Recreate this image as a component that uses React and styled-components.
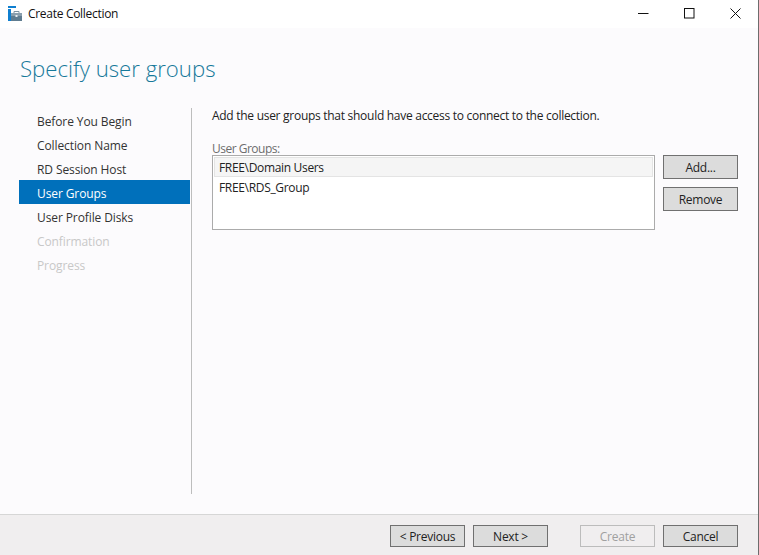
import React from 'react';
import styled, { createGlobalStyle } from 'styled-components';

const Global = createGlobalStyle`
  html, body {
    margin: 0;
    padding: 0;
  }
  * {
    box-sizing: border-box;
  }
`;

const Win = styled.div`
  display: flex;
  flex-direction: column;
  width: 759px;
  height: 555px;
  background: #fcfbfd;
  border-right: 1px solid #6d6d6d;
  font-family: "Open Sans", "Noto Sans", sans-serif;
  font-size: 12px;
  color: #222;
  overflow: hidden;
`;

const TitleBar = styled.div`
  display: flex;
  align-items: center;
  height: 28px;
  flex: none;
  background: #fff;
  padding: 0 0 2px 8px;
`;

const WinTitle = styled.div`
  margin-left: 6px;
  font-size: 12px;
  letter-spacing: -0.3px;
  color: #111;
`;

const WinControls = styled.div`
  display: flex;
  margin-left: auto;
`;

const WinControl = styled.div`
  display: flex;
  align-items: center;
  justify-content: center;
  width: 46px;
  height: 26px;
`;

const Heading = styled.h1`
  margin: 0;
  padding: 26px 0 0 20px;
  height: 80px;
  flex: none;
  font-size: 22.2px;
  font-weight: 300;
  line-height: 30px;
  color: #17799a;
`;

const Content = styled.div`
  display: flex;
  flex: 1;
  min-height: 0;
  padding-left: 19px;
`;

const Nav = styled.div`
  display: flex;
  flex-direction: column;
  width: 173px;
  height: 386px;
  padding-right: 1px;
  border-right: 1px solid #bdbdbd;
`;

const NavItem = styled.div`
  height: 24px;
  line-height: 24px;
  padding: 2px 0 0 18px;
  letter-spacing: -0.1px;
  color: ${(p) => (p.$active ? '#fff' : p.$disabled ? '#c8c8c8' : '#333')};
  background: ${(p) => (p.$active ? '#0070bb' : 'transparent')};
`;

const Main = styled.div`
  flex: 1;
  padding-left: 20px;
  padding-right: 20px;
`;

const Intro = styled.div`
  height: 17px;
  line-height: 17px;
  margin-top: -1px;
  margin-bottom: 17px;
  letter-spacing: -0.28px;
`;

const FieldLabel = styled.div`
  height: 15px;
  line-height: 15px;
  letter-spacing: -0.5px;
  color: #6d6d6d;
`;

const ListRow = styled.div`
  display: flex;
  gap: 8px;
  margin-top: -1px;
`;

const ListBox = styled.div`
  width: 443px;
  height: 75px;
  padding: 1px;
  background: #fff;
  border: 1px solid #ababab;
`;

const ListItem = styled.div`
  height: 20px;
  line-height: 20px;
  padding: 1px 0 0 5px;
  letter-spacing: -0.33px;
  background: ${(p) => (p.$selected ? '#f5f5f5' : 'transparent')};
  outline: ${(p) => (p.$selected ? '1px solid #e4e4e4' : 'none')};
  outline-offset: -1px;
`;

const SideButtons = styled.div`
  display: flex;
  flex-direction: column;
  gap: 8px;
`;

const Button = styled.button`
  width: 75px;
  height: ${(p) => (p.$tall ? '24px' : '22px')};
  padding: 0;
  font-family: inherit;
  font-size: 12px;
  letter-spacing: -0.25px;
  color: ${(p) => (p.disabled ? '#a0a0a0' : '#222')};
  background: ${(p) => (p.disabled ? '#f0eeef' : '#dcdcdc')};
  border: 1px solid ${(p) => (p.disabled ? '#bcbcbc' : '#707070')};
`;

const Footer = styled.div`
  display: flex;
  align-items: flex-start;
  justify-content: flex-end;
  flex: none;
  height: 41px;
  padding: 10px 20px 0 0;
  gap: 8px;
  background: #f0eeef;
  border-top: 1px solid #d6d6d6;
`;

const FooterGap = styled.div`
  width: 16px;
`;

function AppIcon() {
  return (
    <svg width="14" height="15" viewBox="0 0 14 15">
      <rect x="0" y="0" width="8" height="2" fill="#0f7fd0" />
      <rect x="0" y="3" width="3" height="12" fill="#0f7fd0" />
      <rect x="3" y="7" width="11" height="3" fill="#8a9fae" />
      <rect x="3" y="10" width="11" height="5" fill="#5f7c90" />
      <path d="M6 7V5.5h5V7" fill="none" stroke="#7d93a3" />
      <rect x="7.5" y="9" width="2" height="2" fill="#e8eef2" />
    </svg>
  );
}

function MinIcon() {
  return (
    <svg width="11" height="11" viewBox="0 0 11 11">
      <path d="M0 5.5h10.5" stroke="#111" fill="none" />
    </svg>
  );
}

function MaxIcon() {
  return (
    <svg width="11" height="11" viewBox="0 0 11 11">
      <rect x="0.5" y="0.5" width="9.5" height="9.5" stroke="#111" fill="none" />
    </svg>
  );
}

function CloseIcon() {
  return (
    <svg width="11" height="11" viewBox="0 0 11 11">
      <path d="M0.5 0.5l10 10M10.5 0.5l-10 10" stroke="#111" fill="none" />
    </svg>
  );
}

const steps = [
  { label: 'Before You Begin' },
  { label: 'Collection Name' },
  { label: 'RD Session Host' },
  { label: 'User Groups', active: true },
  { label: 'User Profile Disks' },
  { label: 'Confirmation', disabled: true },
  { label: 'Progress', disabled: true },
];

export default function App() {
  return (
    <Win>
      <Global />
      <TitleBar>
        <AppIcon />
        <WinTitle>Create Collection</WinTitle>
        <WinControls>
          <WinControl><MinIcon /></WinControl>
          <WinControl><MaxIcon /></WinControl>
          <WinControl><CloseIcon /></WinControl>
        </WinControls>
      </TitleBar>
      <Heading>Specify user groups</Heading>
      <Content>
        <Nav>
          {steps.map((s) => (
            <NavItem key={s.label} $active={s.active} $disabled={s.disabled}>
              {s.label}
            </NavItem>
          ))}
        </Nav>
        <Main>
          <Intro>Add the user groups that should have access to connect to the collection.</Intro>
          <FieldLabel>User Groups:</FieldLabel>
          <ListRow>
            <ListBox>
              <ListItem $selected>FREE\Domain Users</ListItem>
              <ListItem>FREE\RDS_Group</ListItem>
            </ListBox>
            <SideButtons>
              <Button $tall>Add...</Button>
              <Button $tall>Remove</Button>
            </SideButtons>
          </ListRow>
        </Main>
      </Content>
      <Footer>
        <Button>&lt; Previous</Button>
        <Button>Next &gt;</Button>
        <FooterGap />
        <Button disabled>Create</Button>
        <Button>Cancel</Button>
      </Footer>
    </Win>
  );
}
